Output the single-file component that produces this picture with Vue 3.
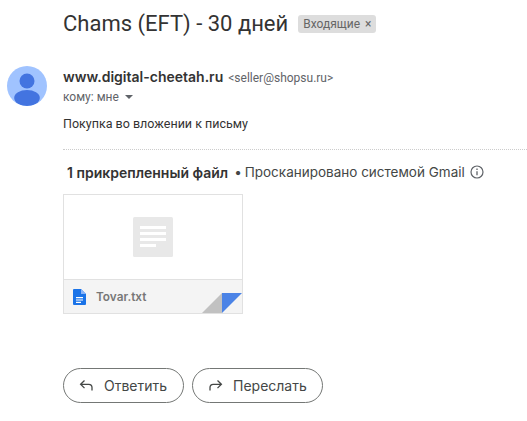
<script setup>
const subject = 'Chams (EFT) - 30 дней'
</script>

<template>
  <div class="page">
    <div class="subject">
      <h1>{{ subject }}</h1>
      <span class="label">Входящие <i>×</i></span>
    </div>

    <div class="message">
      <svg class="avatar" viewBox="0 0 40 40">
        <defs>
          <clipPath id="round"><circle cx="20" cy="20" r="20" /></clipPath>
        </defs>
        <circle cx="20" cy="20" r="20" fill="#a0c3ff" />
        <g clip-path="url(#round)" fill="#4374e0">
          <circle cx="20" cy="15" r="7.5" />
          <ellipse cx="20" cy="32" rx="12.8" ry="8" />
        </g>
      </svg>
      <div class="body">
        <div class="from">
          <b>www.digital-cheetah.ru</b>
          <span>&lt;seller@shopsu.ru&gt;</span>
        </div>
        <div class="to">кому: мне <em></em></div>
        <p>Покупка во вложении к письму</p>
      </div>
    </div>

    <div class="attachments">
      <div class="att-head">
        <b>1 прикрепленный файл</b>
        <span class="dot">•</span>
        <span>Просканировано системой Gmail</span>
        <svg class="info" viewBox="0 0 14 14" fill="none" stroke="#5f6368">
          <circle cx="7" cy="7" r="6" stroke-width="1.2" />
          <path d="M7 6.2v4M7 3.6v1.3" stroke-width="1.3" />
        </svg>
      </div>

      <div class="card">
        <div class="preview">
          <svg viewBox="0 0 40 40" class="doc">
            <rect width="40" height="40" rx="1.5" fill="#e8e8e8" />
            <path d="M7 9h26v3H7zM7 15h26v3H7zM7 21h26v3H7zM7 27h16v3H7z" fill="#fff" />
          </svg>
        </div>
        <div class="file">
          <svg class="file-icon" viewBox="0 0 13 16">
            <path d="M1 0h7l5 5v10a1 1 0 0 1-1 1H1a1 1 0 0 1-1-1V1a1 1 0 0 1 1-1z" fill="#1a73e8" />
            <path d="M3 8h7v1.2H3zM3 10.4h7v1.2H3zM3 12.8h5v1.2H3z" fill="#fff" />
            <path d="M8 0l5 5H8z" fill="#8ab4f8" />
          </svg>
          <span>Tovar.txt</span>
          <svg class="fold" viewBox="0 0 40 20">
            <path d="M20 0v20H0z" fill="#c1c1c1" />
            <path d="M20 0h20L20 20z" fill="#4b83e6" />
          </svg>
        </div>
      </div>
    </div>

    <div class="actions">
      <button class="reply">
        <svg viewBox="0 0 16 14" fill="none" stroke="#444746" stroke-width="1.3">
          <path d="M5.5 1.500 1.600 5.300l3.900 3.800M1.600 5.300h8.200c2 0 3.200 1.300 3.200 3.200v3" />
        </svg>
        Ответить
      </button>
      <button class="forward">
        <svg viewBox="0 0 16 14" fill="none" stroke="#444746" stroke-width="1.3">
          <path d="M10.500 1.500l3.900 3.800-3.900 3.800M14.400 5.300H6.200C4.200 5.300 3 6.600 3 8.500v3" />
        </svg>
        Переслать
      </button>
    </div>
  </div>
</template>

<style>
html, body {
  margin: 0;
  background: #fff;
}
</style>

<style scoped>
.page {
  width: 527px;
  height: 421px;
  overflow: hidden;
  font-family: Inter, "Liberation Sans", sans-serif;
  color: #222;
}

.subject {
  display: flex;
  align-items: center;
  gap: 10px;
  padding: 7px 0 0 63px;
  height: 33px;
}

h1 {
  margin: 0;
  font-family: Roboto, "Liberation Sans", sans-serif;
  font-size: 22px;
  font-weight: 400;
  color: #333;
  white-space: nowrap;
}

.label {
  background: #ddd;
  color: #666;
  font-size: 12px;
  height: 18px;
  line-height: 18px;
  padding: 0 5px;
  border-radius: 3px;
  white-space: nowrap;
  font-family: Roboto, sans-serif;
}

.label i {
  font-style: normal;
  margin-left: 2px;
}

.message {
  display: flex;
  padding: 26px 0 0 7px;
}

.avatar {
  width: 40px;
  height: 40px;
  flex: none;
}

.body {
  margin-left: 16px;
}

.from {
  display: flex;
  align-items: baseline;
  gap: 5px;
  height: 20px;
  line-height: 20px;
  margin-top: 1px;
}

.from b {
  font-family: Inter, sans-serif;
  font-size: 14px;
  font-weight: 600;
  color: #333;
}

.from span {
  font-family: Roboto, sans-serif;
  font-size: 12px;
  color: #5f6368;
}

.to {
  font-family: Roboto, sans-serif;
  font-size: 12px;
  color: #5f6368;
  height: 20px;
  line-height: 20px;
  display: flex;
  align-items: center;
  gap: 6px;
}

.to em {
  width: 0;
  height: 0;
  border-left: 4.500px solid transparent;
  border-right: 4.500px solid transparent;
  border-top: 4.500px solid #5f6368;
}

p {
  margin: 8px 0 0;
  font-family: Roboto, sans-serif;
  font-size: 12.500px;
  line-height: 18px;
  color: #333;
}

.attachments {
  margin: 16px 0 0 63px;
  border-top: 1px dotted #ccc;
  padding-top: 14px;
}

.att-head {
  display: flex;
  align-items: center;
  height: 16px;
  font-size: 13.500px;
  color: #444746;
  white-space: nowrap;
  padding-left: 4px;
}

.att-head b {
  font-size: 14px;
  font-weight: 600;
  color: #333;
  margin-right: 6px;
}

.dot {
  margin-right: 3px;
}

.info {
  width: 14px;
  height: 14px;
  margin-left: 5px;
}

.card {
  margin-top: 14px;
  width: 178px;
  height: 118px;
  border: 1px solid #e1e1e1;
  display: flex;
  flex-direction: column;
}

.preview {
  height: 85px;
  display: flex;
  align-items: flex-start;
  justify-content: center;
  padding-top: 22px;
  box-sizing: border-box;
  border-bottom: 1px solid #e1e1e1;
}

.doc {
  width: 40px;
  height: 40px;
}

.file {
  position: relative;
  flex: 1;
  background: #f4f4f4;
  display: flex;
  align-items: center;
  padding-left: 9px;
  font-size: 11.800px;
  font-weight: 600;
  color: #777;
}

.file-icon {
  width: 13px;
  height: 16px;
  margin-right: 10px;
}

.fold {
  position: absolute;
  right: 0;
  bottom: 0;
  width: 40px;
  height: 20px;
}

.actions {
  display: flex;
  gap: 8px;
  margin: 54px 0 0 63px;
}

button {
  display: flex;
  align-items: center;
  height: 35px;
  border: 1px solid #747775;
  border-radius: 18px;
  background: #fff;
  font-family: Inter, sans-serif;
  font-size: 14px;
  color: #444746;
  padding: 0;
  box-sizing: border-box;
}

.reply {
  width: 121px;
  padding-left: 15px;
  gap: 9px;
}

.forward {
  width: 131px;
  padding-left: 14px;
  gap: 10px;
}

button svg {
  width: 16px;
  height: 14px;
}
</style>
